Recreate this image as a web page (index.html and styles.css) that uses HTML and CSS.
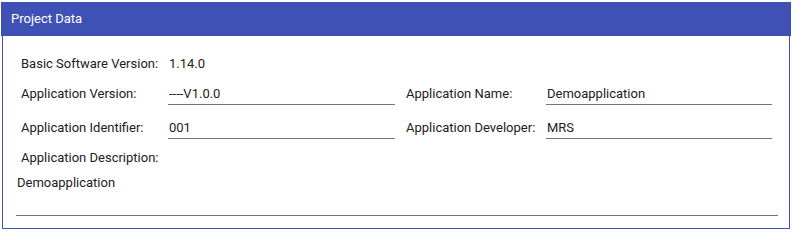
FILE: index.html
```html
<!DOCTYPE html>
<html>
<head>
<meta charset="utf-8">
<link rel="stylesheet" href="styles.css">
</head>
<body>
<div class="card">
  <div class="card-header">Project Data</div>
  <div class="card-body">
    <div class="row row-first">
      <div class="label">Basic Software Version:</div>
      <div class="value plain">1.14.0</div>
    </div>
    <div class="row">
      <div class="label">Application Version:</div>
      <div class="value">----V1.0.0</div>
      <div class="label label-right">Application Name:</div>
      <div class="value">Demoapplication</div>
    </div>
    <div class="row row-wide">
      <div class="label">Application Identifier:</div>
      <div class="value">001</div>
      <div class="label label-right">Application Developer:</div>
      <div class="value">MRS</div>
    </div>
    <div class="row">
      <div class="label label-long">Application Description:</div>
    </div>
    <div class="description">Demoapplication</div>
  </div>
</div>
</body>
</html>
```
FILE: styles.css
```css
html, body {
  margin: 0;
  padding: 0;
  background: #ffffff;
}
body {
  font-family: Roboto, "Liberation Sans", Arial, sans-serif;
  font-size: 13px;
  color: #212121;
}
.card {
  margin: 2px 3px 0 1px;
  height: 227px;
  box-sizing: border-box;
  display: flex;
  flex-direction: column;
}
.card-header {
  background: #3f51b5;
  color: #ffffff;
  height: 34px;
  line-height: 34px;
  padding-left: 10px;
  font-size: 13px;
}
.card-body {
  flex: 1;
  margin: 0 1px 0 1px;
  border: 1px solid #3f51b5;
  border-top: none;
  padding: 18px 11px 0 14px;
}
.row {
  display: grid;
  grid-template-columns: 151px 227px 7px 144px 226px;
  margin-top: 9px;
  line-height: 20px;
}
.row-first {
  margin-top: 0;
}
.row-wide {
  margin-top: 13px;
}
.label {
  padding-left: 4px;
  white-space: nowrap;
}
.label-right {
  grid-column: 4;
}
.label-long {
  grid-column: 1 / 3;
}
.value {
  height: 20px;
  border-bottom: 1px solid #757575;
  white-space: nowrap;
  padding-left: 1px;
}
.value.plain {
  border-bottom-color: transparent;
}
.description {
  margin-top: 5px;
  margin-left: -1px;
  padding-left: 1px;
  height: 42px;
  line-height: 20px;
  border-bottom: 1px solid #757575;
}
```
